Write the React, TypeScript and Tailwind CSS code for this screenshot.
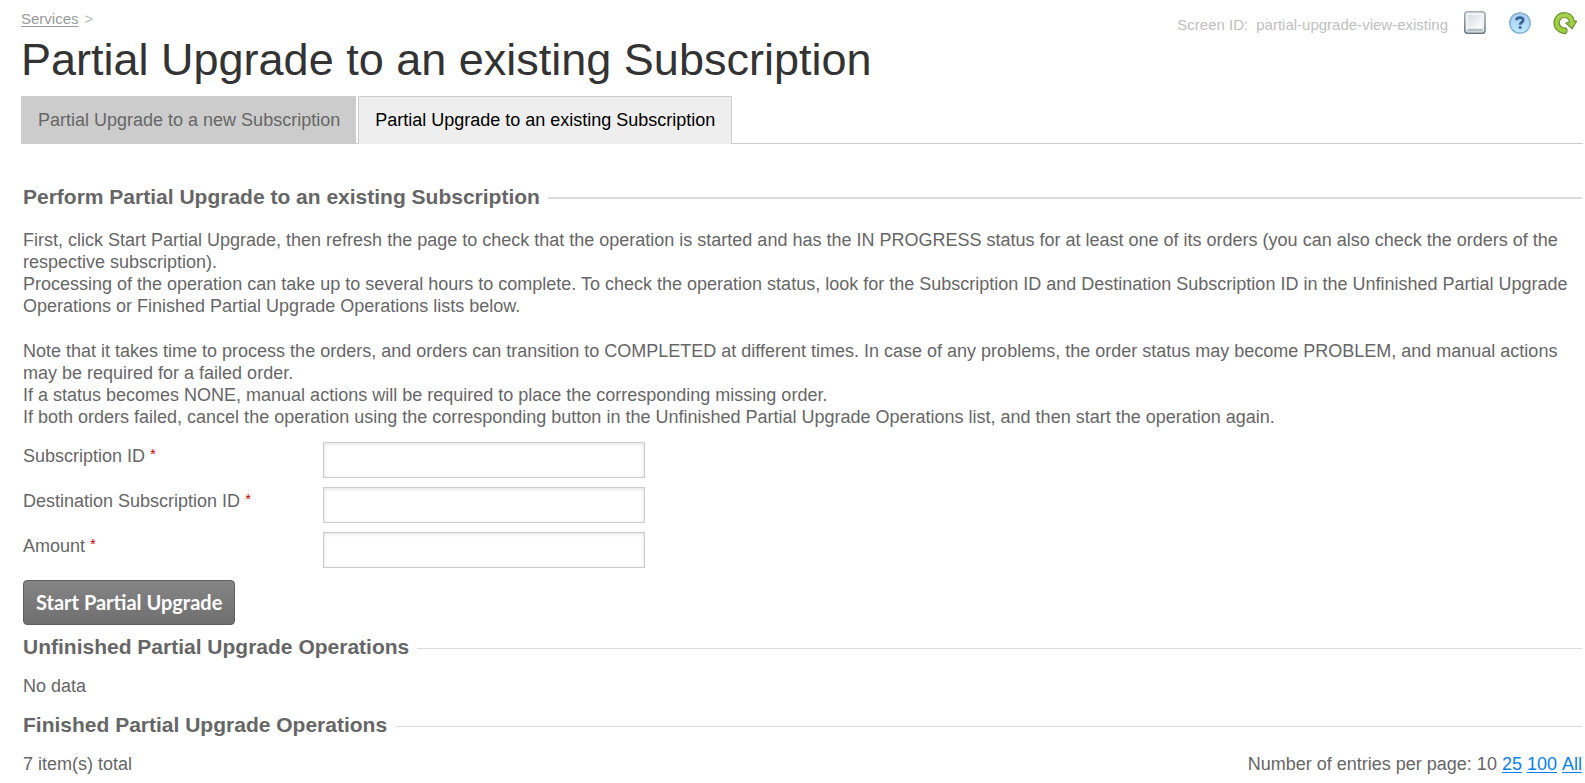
const tabs = [
    { label: "Partial Upgrade to a new Subscription", active: false },
    { label: "Partial Upgrade to an existing Subscription", active: true },
];

const fields = [
    { id: "subscription-id", label: "Subscription ID" },
    { id: "destination-subscription-id", label: "Destination Subscription ID" },
    { id: "amount", label: "Amount" },
];

const pageSizes = ["25", "100", "All"];

function ScreenIcon() {
    return (
        <svg viewBox="0 0 24 24" className="w-6 h-6" aria-hidden="true">
            <defs>
                <linearGradient id="screen-face" x1="0" y1="0" x2="1" y2="1">
                    <stop offset="0" stopColor="#d5dbe1" />
                    <stop offset="1" stopColor="#ffffff" />
                </linearGradient>
                <linearGradient id="screen-frame" x1="0" y1="0" x2="0" y2="1">
                    <stop offset="0" stopColor="#a3adb5" />
                    <stop offset="1" stopColor="#66737d" />
                </linearGradient>
            </defs>
            <rect x="1.8" y="0.8" width="20.2" height="21.4" rx="2.8" fill="#edf1f4" stroke="url(#screen-frame)" strokeWidth="1.5" />
            <rect x="4.8" y="3.4" width="14.2" height="13.6" fill="url(#screen-face)" stroke="#f8fafb" strokeWidth="0.8" />
            <path d="M4.6 17.8h14.6l1.4 2.6H3.2z" fill="#b4bec6" />
        </svg>
    );
}

function HelpIcon() {
    return (
        <svg viewBox="0 0 24 24" className="w-6 h-6" aria-hidden="true">
            <defs>
                <linearGradient id="help-face" x1="0" y1="0" x2="0" y2="1">
                    <stop offset="0" stopColor="#a5cdec" />
                    <stop offset="1" stopColor="#c2eaff" />
                </linearGradient>
            </defs>
            <circle cx="12" cy="12" r="10.2" fill="url(#help-face)" stroke="#78abd2" strokeWidth="1.3" />
            <path d="M8.6 9.2C8.6 5.8 15.2 5.6 15.2 9.1C15.2 11.3 12.2 11.5 12.1 13.8" fill="none" stroke="#34639a" strokeWidth="2.8" />
            <rect x="10.7" y="15.2" width="2.9" height="2.6" rx="0.6" fill="#34639a" />
        </svg>
    );
}

function RefreshIcon() {
    return (
        <svg viewBox="0 0 24 24" className="w-6 h-6" aria-hidden="true">
            <defs>
                <linearGradient id="refresh-face" x1="0" y1="0" x2="0" y2="1">
                    <stop offset="0" stopColor="#a9d24c" />
                    <stop offset="1" stopColor="#9bcb3c" />
                </linearGradient>
            </defs>
            <path
                d="M11.4 22.6C5.4 22 1 17.6 1 12C1 6.200 5.700 1.700 11.500 1.700C16.800 1.700 20.700 5.300 21.300 10.200L23.600 10.100L19.200 17.800L12.800 12L16.500 11.400C16 8.300 14 6.500 11.500 6.500C8.500 6.500 6.200 8.900 6.200 12C6.200 14.200 7.500 15.800 9.600 16.800L12.400 16.900Q14.400 17.700 14 19.900Q13.400 22.600 11.400 22.600Z"
                fill="url(#refresh-face)"
                stroke="#6b9432"
                strokeWidth="1.2"
                strokeLinejoin="round"
            />
        </svg>
    );
}

function SectionTitle({ title, thick = false }: { title: string; thick?: boolean }) {
    return (
        <div className="flex items-center gap-2">
            <h2 className="text-[21px] leading-6 font-bold">{title}</h2>
            <div className={thick ? "flex-1 h-0.5 mt-0.5 bg-[#dcdcdc]" : "flex-1 h-px mt-0.5 bg-[#dcdcdc]"} />
        </div>
    );
}

export default function App() {
    return (
        <main className="pl-[21px] pr-0.5 pt-2.5 bg-white text-[#666666] text-[18px] leading-[22px] font-['Liberation_Sans',Arial,sans-serif]">
            {/* Header */}
            <header className="flex justify-between items-start">
                <div>
                    <nav className="flex gap-1.5 text-[15px] leading-[18px] text-[#999999]">
                        <a href="#services" className="underline underline-offset-2">Services</a>
                        <span className="text-[#bbbbbb]">&gt;</span>
                    </nav>
                    <h1 className="mt-1.5 text-[45px] leading-[52px] text-[#333333]">Partial Upgrade to an existing Subscription</h1>
                </div>
                <div className="flex items-start pt-px pr-1.5 text-[15px] leading-7 text-[#c0c0c0]">
                    <span className="mr-2">Screen ID:</span>
                    <span>partial-upgrade-view-existing</span>
                    <div className="flex gap-[21px] ml-[15px]">
                        <button type="button" aria-label="Screen"><ScreenIcon /></button>
                        <button type="button" aria-label="Help"><HelpIcon /></button>
                        <button type="button" aria-label="Refresh"><RefreshIcon /></button>
                    </div>
                </div>
            </header>

            {/* Tabs */}
            <nav className="flex mt-2.5">
                {tabs.map((tab) =>
                    tab.active ? (
                        <a key={tab.label} href="#existing" aria-current="page" className="h-12 px-4 border border-b-0 border-[#cccccc] bg-[#eeeeee] text-black leading-[46px]">
                            {tab.label}
                        </a>
                    ) : (
                        <div key={tab.label} className="pr-0.5 border-b border-[#cccccc]">
                            <a href="#new" className="block h-[47px] px-4 border-l border-[#cccccc] bg-[#cccccc] leading-[48px]">{tab.label}</a>
                        </div>
                    )
                )}
                <div className="flex-1 border-b border-[#cccccc]" />
            </nav>

            <div className="pl-0.5 pr-px">
                {/* Perform upgrade */}
                <section className="pt-[41px]">
                    <SectionTitle title="Perform Partial Upgrade to an existing Subscription" thick />
                    <div className="mt-5">
                        <p>First, click Start Partial Upgrade, then refresh the page to check that the operation is started and has the IN PROGRESS status for at least one of its orders (you can also check the orders of the respective subscription).</p>
                        <p>Processing of the operation can take up to several hours to complete. To check the operation status, look for the Subscription ID and Destination Subscription ID in the Unfinished Partial Upgrade Operations or Finished Partial Upgrade Operations lists below.</p>
                        <p className="mt-[23px]">Note that it takes time to process the orders, and orders can transition to COMPLETED at different times. In case of any problems, the order status may become PROBLEM, and manual actions may be required for a failed order.</p>
                        <p>If a status becomes NONE, manual actions will be required to place the corresponding missing order.</p>
                        <p>If both orders failed, cancel the operation using the corresponding button in the Unfinished Partial Upgrade Operations list, and then start the operation again.</p>
                    </div>
                    <form className="mt-3.5" onSubmit={(e) => e.preventDefault()}>
                        <div className="flex flex-col gap-[9px]">
                            {fields.map((field) => (
                                <div key={field.id} className="flex items-start">
                                    <label htmlFor={field.id} className="w-[300px] pt-[3px]">
                                        {field.label} <span className="text-[15px] leading-none align-[3px] text-[#cc0000]">*</span>
                                    </label>
                                    <input
                                        id={field.id}
                                        type="text"
                                        className="w-[322px] h-9 px-2 border border-[#cccccc] bg-white shadow-[inset_0_1px_4px_rgba(0,0,0,0.12)] outline-none"
                                    />
                                </div>
                            ))}
                        </div>
                        <button
                            type="submit"
                            className="block mt-3 h-[45px] px-3 pb-0.5 rounded-[4px] border border-[#5f5f5f] bg-linear-to-b from-[#858585] to-[#6f6f6f] text-white text-[20px] font-bold font-['Lato',sans-serif]"
                        >
                            Start Partial Upgrade
                        </button>
                    </form>
                </section>

                {/* Unfinished operations */}
                <section className="mt-2.5">
                    <SectionTitle title="Unfinished Partial Upgrade Operations" />
                    <p className="mt-4">No data</p>
                </section>

                {/* Finished operations */}
                <section className="mt-4">
                    <SectionTitle title="Finished Partial Upgrade Operations" />
                    <div className="flex justify-between mt-4">
                        <span>7 item(s) total</span>
                        <div className="flex gap-[5px]">
                            <span>Number of entries per page: 10</span>
                            {pageSizes.map((size) => (
                                <a key={size} href={`#${size}`} className="text-[#0a80f0] underline underline-offset-2">{size}</a>
                            ))}
                        </div>
                    </div>
                </section>
            </div>
        </main>
    );
}
